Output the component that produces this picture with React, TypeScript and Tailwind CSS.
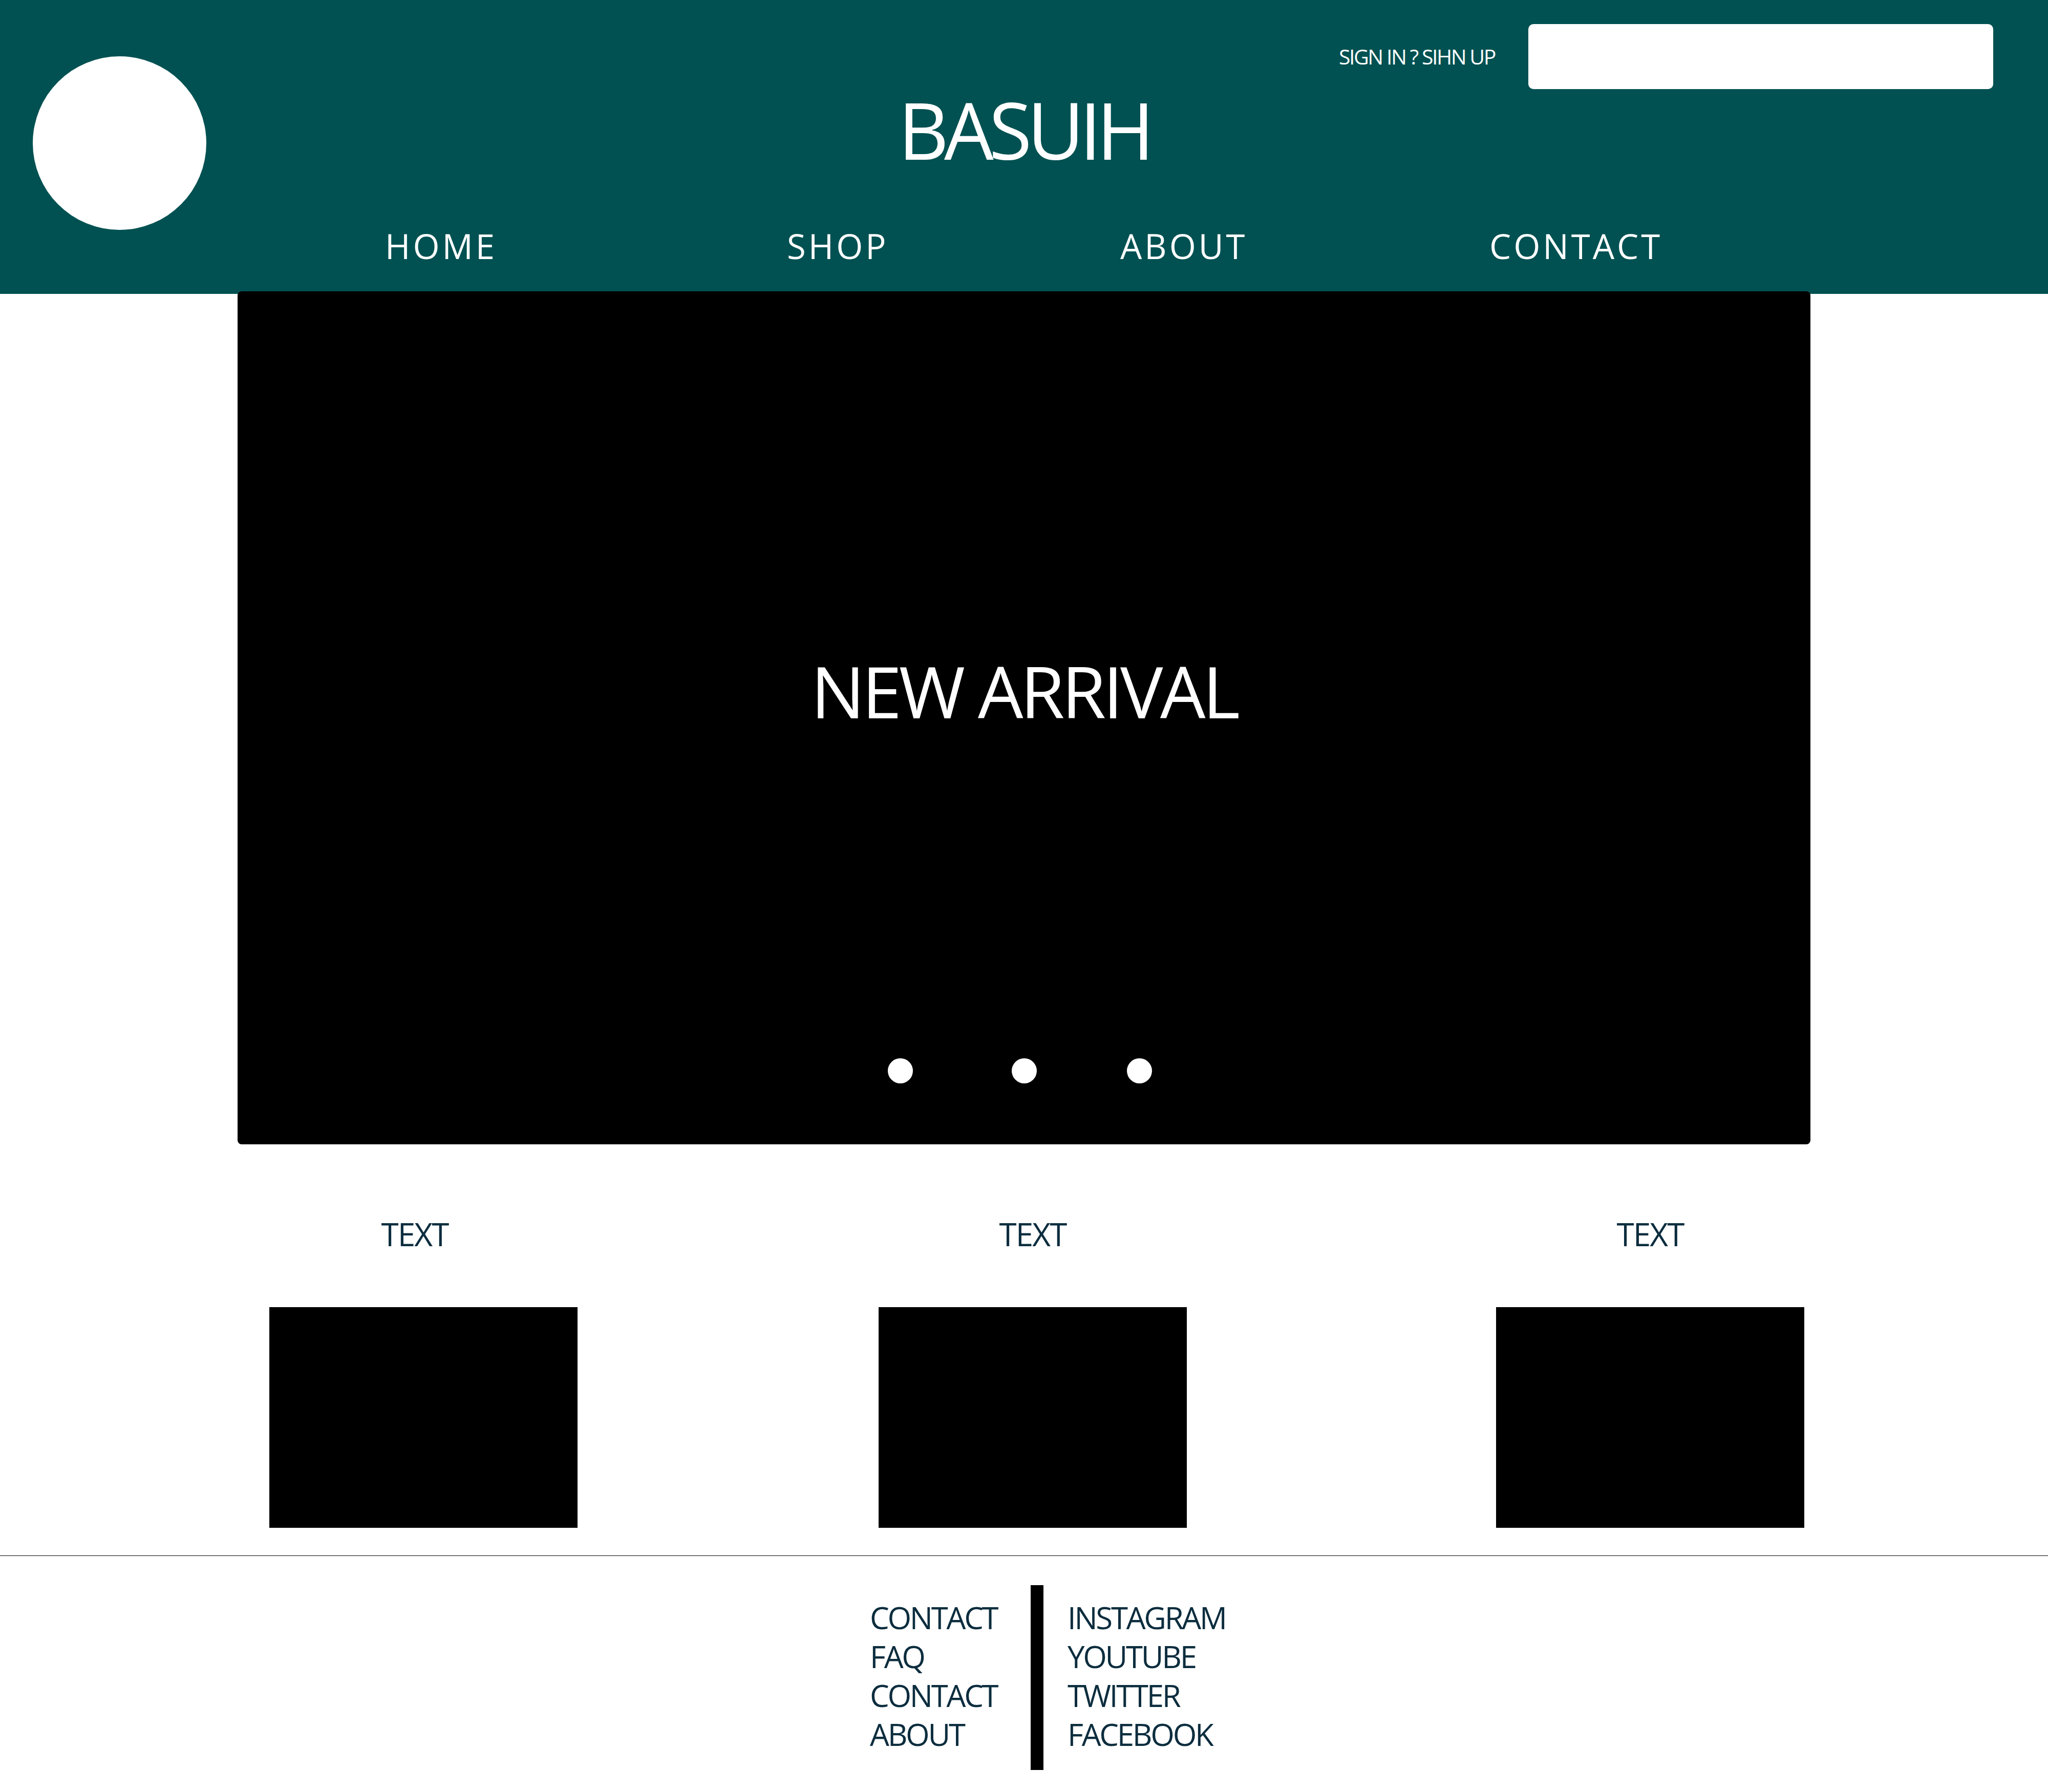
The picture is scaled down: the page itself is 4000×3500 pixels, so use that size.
const navItems = ["HOME", "SHOP", "ABOUT", "CONTACT"]
const cards = ["TEXT", "TEXT", "TEXT"]
const footerLeft = ["CONTACT", "FAQ", "CONTACT", "ABOUT"]
const footerRight = ["INSTAGRAM", "YOUTUBE", "TWITTER", "FACEBOOK"]

export default function App() {
  return (
    <div className="w-[4000px] min-h-[3500px] bg-white font-['Open_Sans',sans-serif]">
      {/* Header */}
      <header className="grid h-[574px] grid-cols-[403px_1fr_403px] content-start bg-[#015152] text-white">
        <div className="col-start-1 row-span-3 row-start-1 ml-[64px] mt-[110px] h-[339px] w-[339px] self-start rounded-full bg-white" />

        <div className="col-span-2 col-start-2 row-start-1 flex items-center justify-end gap-[65px] pr-[107px] pt-[47px]">
          <span className="text-[41px] leading-none tracking-[-0.06em]">SIGN IN ? SIHN UP</span>
          <div className="h-[127px] w-[908px] rounded-[10px] bg-white" />
        </div>

        <h1 className="col-start-2 row-start-2 mt-[2px] text-center text-[153px] leading-none font-normal tracking-[-0.06em]">
          BASUIH
        </h1>

        <nav className="col-span-2 col-start-2 row-start-3 mt-[118px] grid grid-cols-[785px_651px_721px_auto] pl-[349px] text-[67px] leading-none tracking-[5px]">
          {navItems.map((item) => (
            <a key={item} href="#" className="whitespace-nowrap">
              {item}
            </a>
          ))}
        </nav>
      </header>

      {/* Hero */}
      <section className="relative mx-auto -mt-[5px] flex h-[1666px] w-[3072px] flex-col rounded-[8px] bg-black pb-[119px] pt-[710px]">
        <h2 className="text-center text-[140px] leading-none font-normal tracking-[-0.04em] text-white">NEW ARRIVAL</h2>
        <div className="mt-auto flex pl-[1270px]">
          <span className="h-[49px] w-[49px] rounded-full bg-white" />
          <span className="ml-[193px] h-[49px] w-[49px] rounded-full bg-white" />
          <span className="ml-[176px] h-[49px] w-[49px] rounded-full bg-white" />
        </div>
      </section>

      {/* Cards */}
      <section className="mt-[144px] flex pl-[526px]">
        {cards.map((label, i) => (
          <div
            key={i}
            className={`flex w-[602px] flex-col items-center ${i === 1 ? "ml-[588px]" : ""} ${i === 2 ? "ml-[604px]" : ""}`}
          >
            <p className={`text-[62px] leading-none tracking-[-0.03em] text-[#0c2d3e] ${i === 0 ? "mr-[34px]" : ""}`}>
              {label}
            </p>
            <div className="mt-[112px] h-[431px] w-full bg-black" />
          </div>
        ))}
      </section>

      <div className="mt-[54px] h-px bg-black" />

      {/* Footer */}
      <footer className="flex pb-[43px] pl-[1699px] pt-[57px] text-[60px] leading-[76px] tracking-[-0.055em] text-[#0c2d3e]">
        <ul className="w-[314px] pt-[25px]">
          {footerLeft.map((item, i) => (
            <li key={i}>{item}</li>
          ))}
        </ul>
        <div className="h-[361px] w-[25px] bg-black" />
        <ul className="ml-[47px] pt-[25px]">
          {footerRight.map((item) => (
            <li key={item}>{item}</li>
          ))}
        </ul>
      </footer>
    </div>
  )
}
